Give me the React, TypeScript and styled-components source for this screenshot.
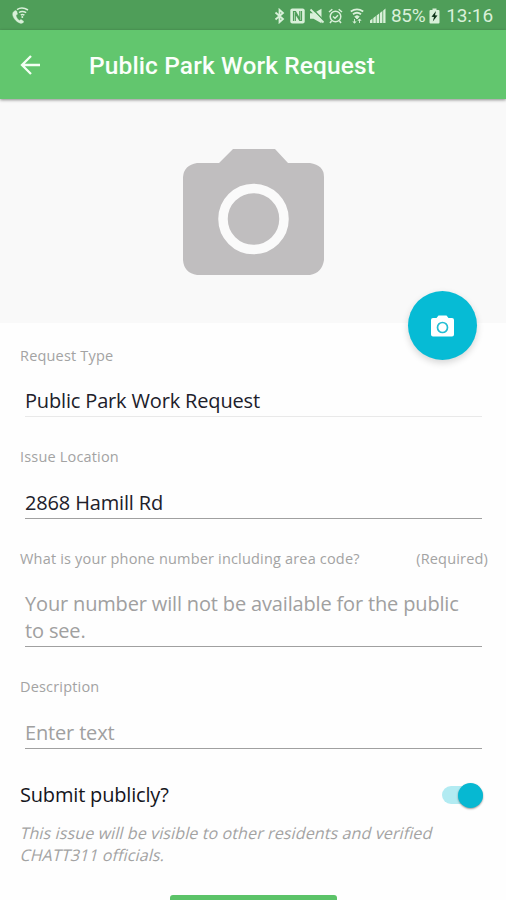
import React from "react";
import styled, { createGlobalStyle } from "styled-components";

const GlobalStyle = createGlobalStyle`
  * { box-sizing: border-box; }
  html, body { margin: 0; background: #fefefe; }
  body { overflow: hidden; }
`;

const Screen = styled.div`
  width: 506px;
  height: 900px;
  overflow: hidden;
  display: flex;
  flex-direction: column;
  background: #fefefe;
  font-family: "Open Sans", "Noto Sans", sans-serif;
`;

const StatusBar = styled.div`
  height: 30px;
  flex: none;
  display: flex;
  align-items: center;
  justify-content: space-between;
  padding: 2px 13px 0 11px;
  background: #4f9e59;
  color: #d9f0d9;
  font-family: Roboto, sans-serif;
`;

const StatusIcons = styled.div`
  display: flex;
  align-items: center;
`;

const Icon = styled.svg<{ $gap?: number }>`
  display: block;
  flex: none;
  margin-left: ${(p) => p.$gap ?? 0}px;
`;

const StatusText = styled.span<{ $gap: number; $spacing: number }>`
  margin-left: ${(p) => p.$gap}px;
  font-size: 19px;
  line-height: 26px;
  letter-spacing: ${(p) => p.$spacing}px;
`;

const AppBar = styled.header`
  height: 69px;
  flex: none;
  display: flex;
  align-items: center;
  padding: 1px 20px 0;
  background: #62c66e;
  box-shadow: 0 1px 3px rgba(0, 0, 0, 0.45);
  z-index: 1;
`;

const BackButton = styled.button`
  width: 22px;
  height: 22px;
  padding: 0;
  border: 0;
  background: none;
`;

const Title = styled.h1`
  margin: 2px 0 0 47px;
  color: #fbfffb;
  font: 500 24.5px/32px Roboto, sans-serif;
  letter-spacing: 0.12px;
`;

const Photo = styled.section`
  position: relative;
  height: 224px;
  flex: none;
  display: flex;
  justify-content: center;
  padding-top: 50px;
  background: #f9f9f9;
`;

const CameraButton = styled.button`
  position: absolute;
  right: 29px;
  bottom: -37px;
  width: 69px;
  height: 69px;
  display: flex;
  align-items: center;
  justify-content: center;
  padding: 0;
  border: 0;
  border-radius: 50%;
  background: #06bbd5;
  box-shadow: 0 3px 7px rgba(0, 0, 0, 0.16);
`;

const Form = styled.main`
  display: flex;
  flex-direction: column;
  padding: 23px 18px 0 20px;
`;

const Field = styled.div`
  margin-bottom: 30px;
`;

const LabelRow = styled.div<{ $gap: number }>`
  display: flex;
  justify-content: space-between;
  margin-bottom: ${(p) => p.$gap}px;
  color: #a3a3a3;
  font-size: 14.5px;
  line-height: 20px;
  letter-spacing: 0.18px;
`;

const Value = styled.div<{ $hint?: boolean; $faint?: boolean }>`
  margin: 0 6px 0 5px;
  padding-bottom: 2px;
  border-bottom: 1px solid ${(p) => (p.$faint ? "#e9e9e9" : "#a0a0a0")};
  color: ${(p) => (p.$hint ? "#a0a0a0" : "#20202a")};
  font-size: 20px;
  line-height: 27px;
  letter-spacing: -0.16px;
`;

const SwitchRow = styled.div`
  display: flex;
  justify-content: space-between;
  align-items: center;
  height: 32px;
  padding-right: 5px;
  color: #15151c;
  font-size: 20px;
  line-height: 28px;
  letter-spacing: -0.18px;
`;

const Track = styled.div`
  width: 41px;
  height: 18px;
  display: flex;
  align-items: center;
  justify-content: flex-end;
  border-radius: 9px;
  background: #b2ebf2;
`;

const Thumb = styled.div`
  width: 25px;
  height: 25px;
  flex: none;
  border-radius: 50%;
  background: #06b8d2;
  box-shadow: 0 1px 2px rgba(0, 0, 0, 0.4);
`;

const Note = styled.p`
  margin: 11px 0 0 1px;
  color: #a3a3a3;
  font-size: 16px;
  line-height: 22px;
  letter-spacing: 0.12px;
`;

/* Slants the upright face, keeping its two-storey letter forms. */
const NoteLine = styled.span`
  display: block;
  white-space: nowrap;
  transform: skewX(-14deg);
`;

const Submit = styled.button`
  align-self: center;
  width: 167px;
  height: 54px;
  margin: 29px 0 0 -2px;
  border: 0;
  border-radius: 3px;
  background: #5bc368;
`;

function StatusGlyphs() {
  return (
    <>
      <Icon $gap={1} width="12" height="16" viewBox="0 0 12 16" fill="none" stroke="currentColor" strokeWidth="1.8">
        <path d="M1.5 4.5 9 11l-3.500 3.200V1.800L9 5l-7.500 6.500" />
      </Icon>
      <Icon $gap={4} width="15" height="16" viewBox="0 0 15 16">
        <rect x="0.300" y="0.500" width="14.400" height="15" rx="2" fill="currentColor" />
        <path d="M3.500 13V3.500h2L9.800 11V3M11.500 3v9.500H9.700L5.300 5.500V13" fill="none" stroke="#4f9e59" strokeWidth="1.200" />
      </Icon>
      <Icon $gap={4} width="16" height="16" viewBox="0 0 16 16">
        <path d="M1 5.300h3.500L12.500.8v14.400L4.500 10.700H1z" fill="currentColor" />
        <path d="M3 .2 15.500 13.500" stroke="#4f9e59" strokeWidth="1.500" />
        <path d="M1.500 1.500 14.500 14.500" stroke="currentColor" strokeWidth="1.800" />
      </Icon>
      <Icon $gap={3} width="15" height="16" viewBox="0 0 15 16" fill="none" stroke="currentColor" strokeWidth="1.500">
        <circle cx="7.500" cy="8.500" r="5.300" />
        <path d="M1 4l3.300-2.800M14 4l-3.300-2.800M3.500 13l-1.500 2M11.500 13l1.500 2M5 8.500l2 1.700 3-3" />
      </Icon>
      <Icon $gap={7} width="14" height="16" viewBox="0 0 14 16" fill="none" stroke="currentColor" strokeWidth="1.900">
        <path d="M.8 3.500Q7-.8 13.200 3.500M3 6.300Q7 3.300 11 6.300" />
        <path d="M4.800 8.600Q7 6.700 9.200 8.600L7 11zM4.500 11v4M3 13.500l1.500 1.800L6 13.500M9.500 15v-4M8 12.700l1.500-1.800 1.500 1.800" fill="currentColor" strokeWidth="0.900" />
      </Icon>
      <Icon $gap={6} width="16" height="16" viewBox="0 0 16 16" fill="currentColor">
        <path d="M0 15v-2.500l2.500-2V15zM3.300 15V10l2.500-2v7zM6.600 15V7.500l2.500-2V15zM9.900 15V5l2.500-2v12zM13.200 15V2.500L15.500.5V15z" />
      </Icon>
    </>
  );
}

export default function App() {
  return (
    <>
      <GlobalStyle />
      <Screen>
        <StatusBar>
          <Icon width="18" height="18" viewBox="0 0 18 18" fill="none" stroke="currentColor">
            <path d="M2 5.500C.5 9 4.500 15 10 16.500l2.200-.8.400-1.500-2.600-1.800-1.600 1C6.500 12.500 5 10 5 8l1.500-.8-.8-3.200-1.700-.500z" fill="currentColor" strokeWidth="0.400" />
            <path d="M6 2.600Q11-.6 17 3M8 5.500q3.200-2.300 7.200.2M9.800 8q1.700-1 3.600.2" strokeWidth="1.500" />
            <circle cx="11.300" cy="10" r="1" fill="currentColor" stroke="none" />
          </Icon>
          <StatusIcons>
            <StatusGlyphs />
            <StatusText $gap={5} $spacing={-0.4}>85%</StatusText>
            <Icon $gap={4} width="11" height="16" viewBox="0 0 11 16">
              <path d="M1.500 2H3.500V.5h4V2h2q1 0 1 1v11.500q0 1-1 1h-8q-1 0-1-1V3q0-1 1-1z" fill="currentColor" />
              <path d="M7 3 2.500 8.800l2.500.2L3.800 13.500 8.500 7.600 6 7.300z" fill="#10351b" />
            </Icon>
            <StatusText $gap={6} $spacing={-0.1}>13:16</StatusText>
          </StatusIcons>
        </StatusBar>
        <AppBar>
          <BackButton aria-label="Back">
            <Icon width="22" height="20" viewBox="0 0 22 20" fill="none" stroke="#f4fff4" strokeWidth="2.300">
              <path d="M20 10H2.500M11 1 2 10l9 9" />
            </Icon>
          </BackButton>
          <Title>Public Park Work Request</Title>
        </AppBar>
        <Photo>
          <Icon width="141" height="126" viewBox="0 0 141 126">
            <path d="M50 0H92L105 14H127Q141 16 141 28V111Q139 124 127 126H14Q1 124 0 111V28Q1 16 14 14H36Z" fill="#c0bebf" />
            <circle cx="70.500" cy="70" r="30.500" fill="none" stroke="#fafafa" strokeWidth="9.500" />
          </Icon>
          <CameraButton aria-label="Add photo">
            <Icon width="23" height="22" viewBox="0 0 23 22">
              <path d="M7.500.5h8l2 2.500H21q2 0 2 2v14.500q0 2-2 2H2q-2 0-2-2V5q0-2 2-2h3.500z" fill="#fff" />
              <circle cx="11.500" cy="12.500" r="5" fill="none" stroke="#23bed4" strokeWidth="1.700" />
            </Icon>
          </CameraButton>
        </Photo>
        <Form>
          <Field>
            <LabelRow $gap={21}><span>Request Type</span></LabelRow>
            <Value $faint>Public Park Work Request</Value>
          </Field>
          <Field>
            <LabelRow $gap={22}><span>Issue Location</span></LabelRow>
            <Value>2868 Hamill Rd</Value>
          </Field>
          <Field>
            <LabelRow $gap={21}>
              <span>What is your phone number including area code?</span>
              <span>(Required)</span>
            </LabelRow>
            <Value $hint>Your number will not be available for the public to see.</Value>
          </Field>
          <Field>
            <LabelRow $gap={22}><span>Description</span></LabelRow>
            <Value $hint>Enter text</Value>
          </Field>
          <SwitchRow>
            <span>Submit publicly?</span>
            <Track role="switch" aria-checked="true"><Thumb /></Track>
          </SwitchRow>
          <Note>
            <NoteLine>This issue will be visible to other residents and verified</NoteLine>
            <NoteLine>CHATT311 officials.</NoteLine>
          </Note>
          <Submit aria-label="Submit" />
        </Form>
      </Screen>
    </>
  );
}
